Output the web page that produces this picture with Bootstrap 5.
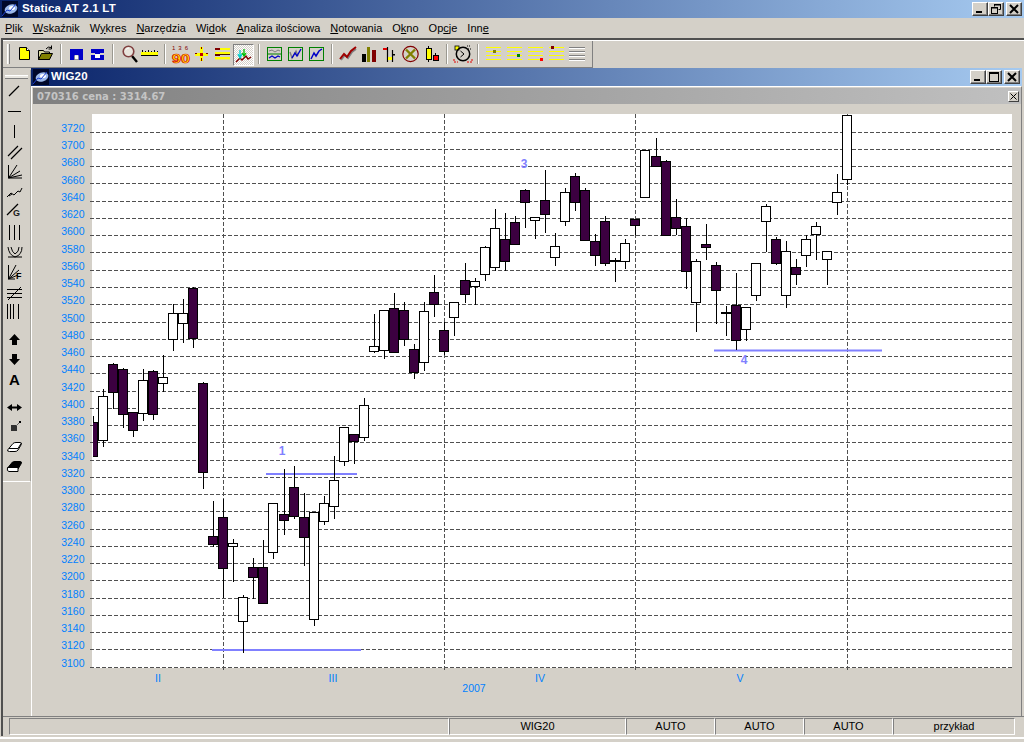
<!DOCTYPE html>
<html lang="pl">
<head>
<meta charset="utf-8">
<title>Statica AT 2.1 LT</title>
<link rel="stylesheet" href="https://cdn.jsdelivr.net/npm/bootstrap@5.3.0/dist/css/bootstrap.min.css">
<style>
html,body{margin:0;background:#d4d0c8;}
body{font-family:"Liberation Sans",Arial,sans-serif;font-size:11px;color:#000;overflow:hidden;}
.app-shell{width:1024px;height:742px;background:#d4d0c8;overflow:hidden;}
.cap-main{height:18px;background:linear-gradient(90deg,#0a246a,#a6caf0);color:#fff;font-weight:700;font-size:11.5px;padding:0 2px 0 2px;}
.cap-win{height:18px;background:linear-gradient(90deg,#0a246a,#a6caf0);color:#fff;font-weight:700;font-size:11.5px;padding:0 2px 0 2px;}
.cap-title{margin-left:4px;letter-spacing:.2px;}
.cap-name{margin-left:2px;letter-spacing:.2px;}
.cap-gap{width:2px;}
.win-btn{width:16px;height:14px;padding:0;margin:0;background:#d4d0c8;border-style:solid;border-width:1px;border-color:#fff #404040 #404040 #fff;border-radius:0;display:flex;align-items:center;justify-content:center;line-height:0;box-shadow:inset -1px -1px 0 #808080;}
.menu-row{height:20px;padding-left:5px;gap:10px;}
.menu-row a{color:#000;text-decoration:none;font-size:11px;line-height:20px;}
.client-box{height:698px;margin-left:1px;border-top:2px solid #505050;border-left:2px solid #505050;}
.tool-row{height:28px;border-top:1px solid #fff;}
.tool-strip{width:590px;height:27px;padding:3px 0 0 4px;border-right:1px solid #808080;border-bottom:1px solid #808080;}
.t-grip{width:3px;height:20px;margin-right:4px;border-left:1px solid #fff;border-right:1px solid #808080;background:#e8e6e0;}
.t-btn{width:21px;height:22px;flex:none;display:block;}
.t-sep{width:10px;height:20px;flex:none;display:flex;justify-content:center;}
.t-sep::before{content:"";width:2px;height:100%;background:#9a9890;border-right:1px solid #fff;}
.t-down{border-style:solid;border-width:1px;border-color:#808080 #fff #fff #808080;background-color:#fff;background-image:conic-gradient(#d4d0c8 25%,#fff 0 50%,#d4d0c8 0 75%,#fff 0);background-size:2px 2px;}
.work-row{height:648px;}
.side-bar{width:28px;height:412px;margin-top:2px;border-right:1px solid #a8a69f;border-bottom:1px solid #fff;flex:none;}
.side-grip{height:11px;padding:5px 2px 0 2px;}
.side-grip::before{content:"";display:block;height:2px;background:#e8e6e0;border-bottom:1px solid #808080;border-top:1px solid #fff;box-sizing:content-box;}
.s-btn{width:27px;height:20px;display:block;flex:none;}
.s-gap-a{height:9px;}
.s-gap-b{height:7px;}
.mdi-win{width:991px;flex:none;}
.mdi-body{height:630px;border-top:1px solid #fff;border-left:1px solid #fff;border-right:1px solid #808080;padding-top:1px;}
.info-bar{height:16px;margin-left:1px;background:linear-gradient(90deg,#808080,#c0c0c0);color:#c4c4c4;font-family:"DejaVu Sans",sans-serif;font-weight:700;font-size:10px;padding:0 2px 0 4px;}
.info-x{width:11px;height:11px;padding:0;background:#d4d0c8;border-style:solid;border-width:1px;border-color:#fff #404040 #404040 #fff;border-radius:0;line-height:0;display:flex;align-items:center;justify-content:center;}
.chart-svg{display:block;width:989px;height:612px;}
.chart-svg text{font-family:"Liberation Sans",Arial,sans-serif;}
.ax{fill:#0080ff;font-size:10.5px;}
.mk{fill:#8080ff;font-size:12px;font-weight:700;text-anchor:middle;}
.status-row{height:20px;border-top:1px solid #808080;padding:1px 0 0 6px;}
.st-cell{height:17px;border-style:solid;border-width:1px;border-color:#808080 #fff #fff #808080;font-size:11px;line-height:15px;text-align:center;}
.foot-line{height:2px;margin-top:1px;background:#fff;}
</style>
</head>
<body>
<div class="app-shell d-flex flex-column">

  <div class="cap-main d-flex align-items-center">
    <svg width="16" height="16" viewBox="0 0 16 16"><rect width="16" height="16" fill="#00082a"/><ellipse cx="9" cy="8" rx="6.5" ry="4.5" fill="#9bb8ea" transform="rotate(-20 9 8)"/><ellipse cx="10" cy="7" rx="3" ry="2" fill="#fff"/><path d="M0 15L5 9L8 10L14 3" stroke="#1c3fd0" fill="none"/></svg>
    <span class="cap-title flex-grow-1">Statica AT 2.1 LT</span>
    <div class="d-flex">
      <button class="win-btn" type="button" aria-label="min"><svg width="14" height="12" viewBox="0 0 14 12"><rect x="3" y="8" width="6" height="2" fill="#000"/></svg></button>
      <button class="win-btn" type="button" aria-label="restore"><svg width="14" height="12" viewBox="0 0 14 12"><path d="M5.5 3.5V1.5H11.5V6.5H9.5" fill="none" stroke="#000"/><rect x="5" y="1" width="7" height="1.5" fill="#000"/><rect x="2.5" y="4.5" width="6" height="6" fill="none" stroke="#000"/><rect x="2" y="4" width="7" height="1.5" fill="#000"/></svg></button>
      <span class="cap-gap"></span>
      <button class="win-btn" type="button" aria-label="close"><svg width="14" height="12" viewBox="0 0 14 12"><path d="M3 2L11 10M11 2L3 10" stroke="#000" stroke-width="2"/></svg></button>
    </div>
  </div>

  <nav class="menu-row d-flex">
    <a href="#"><u>P</u>lik</a><a href="#"><u>W</u>skaźnik</a><a href="#">W<u>y</u>kres</a><a href="#"><u>N</u>arzędzia</a><a href="#">Wi<u>d</u>ok</a><a href="#"><u>A</u>naliza ilościowa</a><a href="#"><u>N</u>otowania</a><a href="#">O<u>k</u>no</a><a href="#">Op<u>c</u>je</a><a href="#">Inn<u>e</u></a>
  </nav>

  <div class="client-box d-flex flex-column">
    <div class="tool-row">
      <div class="tool-strip d-flex align-items-start">
        <span class="t-grip"></span>
        <svg class="t-btn" viewBox="0 0 21 22"><path d="M5.5 3.5H12.5L15.5 6.5V15.5H5.5Z" fill="#ff0" stroke="#000"/><path d="M12.5 3.5V6.5H15.5" fill="#fff" stroke="#000"/></svg>
        <svg class="t-btn" viewBox="0 0 21 22"><path d="M3.5 6.5H8.5L9.5 8H14.5V15.5H3.5Z" fill="#d8d8a0" stroke="#000"/><path d="M3.5 15.5L6.5 9.5H17.5L14.5 15.5Z" fill="#808000" stroke="#000"/><path d="M11 5Q13 2 16 3.5M16.5 1.5V5H13.5" fill="none" stroke="#000"/></svg>
        <span class="t-sep"></span>
        <svg class="t-btn" viewBox="0 0 21 22"><path d="M4 5H17V16H12V11H9V16H4Z" fill="#0000c8"/><path d="M8.5 11.5V15.5H12.5V11.5" fill="#fff" stroke="#8a8a8a" stroke-width=".8"/></svg>
        <svg class="t-btn" viewBox="0 0 21 22"><path d="M4 5H17V16H4Z" fill="#0000c8"/><rect x="4" y="9" width="4" height="2" fill="#d4d0c8"/><rect x="13" y="9" width="4" height="2" fill="#d4d0c8"/><rect x="8" y="10" width="5" height="4" fill="#fff"/></svg>
        <span class="t-sep"></span>
        <svg class="t-btn" viewBox="0 0 21 22"><path d="M14 12L19 18" stroke="#000" stroke-width="2.4"/><circle cx="10.5" cy="7.5" r="5.3" fill="#e8e4dc" stroke="#804040" stroke-width="1.6"/><path d="M7.5 6Q9 4 11 4" stroke="#fff" fill="none"/></svg>
        <svg class="t-btn" viewBox="0 0 21 22"><rect x="2" y="8" width="17" height="3" fill="#ff0"/><path d="M2 11.5H19" stroke="#000"/><path d="M3.5 8V6M6.5 8V7M9.5 8V6M12.5 8V7M15.5 8V6M18.5 8V7" stroke="#000"/></svg>
        <span class="t-sep"></span>
        <svg class="t-btn" viewBox="0 0 21 22"><text x="2" y="6" font-size="6" fill="#800000" font-family="Liberation Sans" textLength="16" lengthAdjust="spacing">1 3 6</text><text x="2" y="18.5" font-size="12" font-weight="700" fill="#ff0" stroke="#e00000" stroke-width=".7" font-family="Liberation Sans" textLength="18" lengthAdjust="spacingAndGlyphs">90</text></svg>
        <svg class="t-btn" viewBox="0 0 21 22"><rect x="4" y="9" width="13" height="3" fill="#ff0"/><rect x="9" y="3" width="3" height="14" fill="#ff0"/><rect x="9" y="9" width="3" height="3" fill="#c00000"/><path d="M4 9.5H6M15 9.5H17M10.5 3V5M10.5 14V17" stroke="#800000"/></svg>
        <svg class="t-btn" viewBox="0 0 21 22"><rect x="3" y="4" width="5" height="2" fill="#800000"/><rect x="8" y="4" width="10" height="2" fill="#ff0"/><rect x="3" y="8" width="15" height="2" fill="#ff0"/><rect x="3" y="10" width="5" height="2" fill="#600000"/><rect x="8" y="10" width="10" height="1" fill="#402000"/><rect x="3" y="13" width="15" height="2.4" fill="#ff0"/></svg>
        <svg class="t-btn t-down" viewBox="0 0 19 20"><path d="M2 17L6 13L8 15L12 11L14 14L17 12" stroke="#800000" fill="none" stroke-width="1.4"/><path d="M6 5V13M4 9L6 13L8 9" stroke="#00d0d0" fill="none" stroke-width="1.3"/><path d="M10 4V11M8 8L10 11L12 8" stroke="#00c000" fill="none" stroke-width="1.3"/></svg>
        <span class="t-sep"></span>
        <svg class="t-btn" viewBox="0 0 21 22"><rect x="3.5" y="3.5" width="14" height="13" fill="#d4d0c8" stroke="#008000"/><path d="M4 10H17" stroke="#008000"/><path d="M5 7L8 6L11 8L14 6L16 7" stroke="#808080" fill="none"/><path d="M5 14L8 12L11 14L14 12L16 13" stroke="#0000c8" fill="none" stroke-width="1.2"/></svg>
        <svg class="t-btn" viewBox="0 0 21 22"><rect x="3.5" y="3.5" width="14" height="13" fill="#d4d0c8" stroke="#008000"/><path d="M5 8L7 14L11 7L13 12" stroke="#808080" fill="none" stroke-width="1.4"/><path d="M7 14L10 9L12 12L16 5" stroke="#0000c8" fill="none" stroke-width="1.4"/></svg>
        <svg class="t-btn" viewBox="0 0 21 22"><rect x="3.5" y="3.5" width="14" height="13" fill="#d4d0c8" stroke="#008000"/><path d="M5 15L8 9L10 12L13 7L16 5" stroke="#0000c8" fill="none" stroke-width="1.5"/></svg>
        <span class="t-sep"></span>
        <svg class="t-btn" viewBox="0 0 21 22"><path d="M4 16L8 11L11 14L15 8L19 5" stroke="#808080" fill="none" stroke-width="2"/><path d="M3 15L7 10L10 13L14 7L19 3" stroke="#a00000" fill="none" stroke-width="2"/></svg>
        <svg class="t-btn" viewBox="0 0 21 22"><rect x="4" y="10" width="4" height="8" fill="#000"/><rect x="9" y="3" width="3" height="15" fill="#808000"/><rect x="14" y="6" width="4" height="12" fill="#800000"/></svg>
        <svg class="t-btn" viewBox="0 0 21 22"><path d="M8.5 3V18M13.5 6V18" stroke="#000" fill="none" stroke-width="1.2"/><rect x="4" y="4" width="4" height="2" fill="#e00000"/><rect x="9" y="13" width="4" height="3" fill="#ff0"/><rect x="14" y="10" width="2" height="1.5" fill="#000"/></svg>
        <svg class="t-btn" viewBox="0 0 21 22"><circle cx="10.5" cy="10" r="7.7" fill="#d4d0c8" stroke="#800000" stroke-width="1.2"/><path d="M6 5.5L15 14.5M15 5.5L6 14.5" stroke="#808000" stroke-width="2.4"/></svg>
        <svg class="t-btn" viewBox="0 0 21 22"><path d="M7.5 2V18" stroke="#000"/><rect x="5.5" y="4.5" width="5" height="11" fill="#ff0" stroke="#000"/><path d="M14.5 9V17" stroke="#000"/><rect x="12.5" y="11.5" width="5" height="5" fill="#f00" stroke="#000"/></svg>
        <span class="t-sep"></span>
        <svg class="t-btn" viewBox="0 0 21 22"><rect x="3" y="2" width="4" height="4" fill="#ff0" stroke="#000" stroke-width=".8"/><circle cx="11" cy="10" r="6.7" fill="none" stroke="#000" stroke-width="1.5"/><path d="M8.5 7L12 10L8.5 13" fill="none" stroke="#000"/><path d="M15 2h4M16 5h3" stroke="#000" stroke-dasharray="1 1"/><path d="M2 15v3h4M15 18h5v-3" stroke="#e00000" stroke-dasharray="2 1" fill="none"/></svg>
        <span class="t-sep"></span>
        <svg class="t-btn" viewBox="0 0 21 22"><path d="M3 3.5H18M3 7.5H18M3 11.5H18M3 15.5H18" stroke="#ff0"/><rect x="10" y="6" width="3" height="3" fill="#808000"/></svg>
        <svg class="t-btn" viewBox="0 0 21 22"><path d="M3 3.5H18M3 7.5H18M3 11.5H18M3 15.5H18" stroke="#ff0"/><rect x="13" y="10" width="3" height="3" fill="#008000"/></svg>
        <svg class="t-btn" viewBox="0 0 21 22"><path d="M3 3.5H18M3 7.5H18M3 11.5H18M3 15.5H18" stroke="#ff0"/><rect x="15" y="14" width="3" height="3" fill="#f00"/></svg>
        <svg class="t-btn" viewBox="0 0 21 22"><path d="M3 3.5H18M3 7.5H18M3 11.5H18M3 15.5H18" stroke="#ff0"/><rect x="5" y="2" width="3" height="3" fill="#800000"/></svg>
        <svg class="t-btn" viewBox="0 0 21 22"><path d="M2 3.5H18M2 7.5H18M2 11.5H18M2 15.5H18" stroke="#808080"/><path d="M2 4.5H18M2 8.5H18M2 12.5H18M2 16.5H18" stroke="#fff"/></svg>
      </div>
    </div>

    <div class="work-row d-flex">
      <div class="side-bar d-flex flex-column">
        <div class="side-grip"></div>
        <svg class="s-btn" viewBox="0 0 27 20"><path d="M6 15L16 5" stroke="#000" stroke-width="1.2"/></svg>
        <svg class="s-btn" viewBox="0 0 27 20"><path d="M5 10.5H18" stroke="#000"/></svg>
        <svg class="s-btn" viewBox="0 0 27 20"><path d="M11.5 4V17" stroke="#000"/></svg>
        <svg class="s-btn" viewBox="0 0 27 20"><path d="M5 15L15 5M8 18L19 7" stroke="#000" stroke-width="1.2"/></svg>
        <svg class="s-btn" viewBox="0 0 27 20"><path d="M5.5 4V17H19" stroke="#000" fill="none"/><path d="M5.5 17L14 4M5.5 17L17 10M5.5 17L19 14" stroke="#000"/></svg>
        <svg class="s-btn" viewBox="0 0 27 20"><path d="M4 16L8 12L11 14L15 10L17 11L19 7" stroke="#000" fill="none"/><path d="M6 15L9 13" stroke="#000"/></svg>
        <svg class="s-btn" viewBox="0 0 27 20"><path d="M4 14L15 3" stroke="#000" stroke-width="1.3"/><text x="10" y="15" font-size="9" font-weight="700" fill="#202020" font-family="Liberation Sans">G</text></svg>
        <svg class="s-btn" viewBox="0 0 27 20"><path d="M6.5 4V19M11.5 4V19M16.5 4V19" stroke="#000"/></svg>
        <svg class="s-btn" viewBox="0 0 27 20"><path d="M5 6Q6 14 12 16Q19 14 19 6M8 6Q9 11 12 13Q16 11 16 6M5 16H19" stroke="#000" fill="none"/></svg>
        <svg class="s-btn" viewBox="0 0 27 20"><path d="M5.5 4V18H12" stroke="#000" fill="none"/><path d="M5.5 18L13 4M5.5 18L16 9M5.5 18L15 14" stroke="#000"/><text x="13" y="18" font-size="9" font-weight="700" font-family="Liberation Sans">F</text></svg>
        <svg class="s-btn" viewBox="0 0 27 20"><path d="M4 8.5H19M4 12.5H19M4 16.5H19M5 19L18 6" stroke="#000"/></svg>
        <svg class="s-btn" viewBox="0 0 27 20"><path d="M4.5 3V18M7.5 3V18M10.5 3V18M15.5 3V18" stroke="#000"/></svg>
        <div class="s-gap-a"></div>
        <svg class="s-btn" viewBox="0 0 27 20"><path d="M11.5 4L17 10H14V15H9V10H6Z" fill="#000"/></svg>
        <svg class="s-btn" viewBox="0 0 27 20"><path d="M11.5 15L17 9H14V4H9V9H6Z" fill="#000"/></svg>
        <svg class="s-btn" viewBox="0 0 27 20"><text x="11.5" y="15" font-size="15" font-weight="700" text-anchor="middle" font-family="Liberation Sans">A</text></svg>
        <div class="s-gap-b"></div>
        <svg class="s-btn" viewBox="0 0 27 20"><path d="M4 10.5L9 7V9.5H14V7L19 10.5L14 14V11.5H9V14Z" fill="#000"/></svg>
        <svg class="s-btn" viewBox="0 0 27 20"><rect x="8" y="8" width="6" height="6" fill="#303030"/><path d="M13 9L17 5" stroke="#606060"/><rect x="16" y="4" width="2" height="2" fill="#000"/></svg>
        <svg class="s-btn" viewBox="0 0 27 20"><path d="M5 12.5L10 6.5Q11 5.5 13 5.5H17Q19.5 5.5 18 8L15 13Q14 14.5 12 14.5H6.5Q3.5 14.5 5 12.5Z" fill="#fff" stroke="#000" stroke-linejoin="round"/><path d="M6 11.5H15L18 6.5" fill="none" stroke="#000"/></svg>
        <svg class="s-btn" viewBox="0 0 27 20"><path d="M5 10.5L9.5 5Q10.5 4.5 12 4.5H17Q19.5 4.5 18 7L15 12H5Z" fill="#000" stroke="#000" stroke-linejoin="round"/><path d="M4.5 10.5H15V14.5H6Q3.5 14.5 4.5 10.5Z" fill="#fff" stroke="#000" stroke-linejoin="round"/></svg>
      </div>

      <div class="mdi-win">
        <div class="cap-win d-flex align-items-center">
          <svg width="16" height="16" viewBox="0 0 16 16"><rect width="16" height="16" fill="#00082a"/><ellipse cx="9" cy="8" rx="6.5" ry="4.5" fill="#9bb8ea" transform="rotate(-20 9 8)"/><ellipse cx="10" cy="7" rx="3" ry="2" fill="#fff"/><path d="M0 15L5 9L8 10L14 3" stroke="#1c3fd0" fill="none"/></svg>
          <span class="flex-grow-1 cap-name">WIG20</span>
          <div class="d-flex">
            <button class="win-btn" type="button" aria-label="min"><svg width="14" height="12" viewBox="0 0 14 12"><rect x="3" y="8" width="6" height="2" fill="#000"/></svg></button>
            <button class="win-btn" type="button" aria-label="max"><svg width="14" height="12" viewBox="0 0 14 12"><rect x="2.5" y="1.5" width="9" height="9" fill="none" stroke="#000"/><rect x="2" y="1" width="10" height="2" fill="#000"/></svg></button>
            <span class="cap-gap"></span>
            <button class="win-btn" type="button" aria-label="close"><svg width="14" height="12" viewBox="0 0 14 12"><path d="M3 2L11 10M11 2L3 10" stroke="#000" stroke-width="2"/></svg></button>
          </div>
        </div>
        <div class="mdi-body">
          <div class="info-bar d-flex align-items-center justify-content-between">
            <span>070316 cena : 3314.67</span>
            <button class="info-x" type="button" aria-label="x"><svg width="9" height="9" viewBox="0 0 9 9"><path d="M1.5 1.5L7.5 7.5M7.5 1.5L1.5 7.5" stroke="#000"/></svg></button>
          </div>
          <svg class="chart-svg" viewBox="32 104 989 612" id="chart">
            <defs><clipPath id="plotclip"><rect x="93" y="114" width="919" height="560"/></clipPath></defs>
            <rect x="92" y="114" width="920" height="554" fill="#fff"/>
            <g id="grid"></g>
            <g class="ax" text-anchor="end">
              <text x="84.5" y="132">3720</text><text x="84.5" y="149">3700</text><text x="84.5" y="166">3680</text><text x="84.5" y="184">3660</text><text x="84.5" y="201">3640</text><text x="84.5" y="218">3620</text><text x="84.5" y="235">3600</text><text x="84.5" y="253">3580</text><text x="84.5" y="270">3560</text><text x="84.5" y="287">3540</text><text x="84.5" y="304">3520</text><text x="84.5" y="322">3500</text><text x="84.5" y="339">3480</text><text x="84.5" y="356">3460</text><text x="84.5" y="373">3440</text><text x="84.5" y="391">3420</text><text x="84.5" y="408">3400</text><text x="84.5" y="425">3380</text><text x="84.5" y="442">3360</text><text x="84.5" y="460">3340</text><text x="84.5" y="477">3320</text><text x="84.5" y="494">3300</text><text x="84.5" y="511">3280</text><text x="84.5" y="529">3260</text><text x="84.5" y="546">3240</text><text x="84.5" y="563">3220</text><text x="84.5" y="580">3200</text><text x="84.5" y="598">3180</text><text x="84.5" y="615">3160</text><text x="84.5" y="632">3140</text><text x="84.5" y="649">3120</text><text x="84.5" y="667">3100</text>
            </g>
            <g class="ax" text-anchor="middle">
              <text x="158" y="682">II</text><text x="333" y="682">III</text><text x="540" y="682">IV</text><text x="740" y="682">V</text><text x="474" y="692">2007</text>
            </g>
            <rect x="266" y="473" width="91" height="2" fill="#8080ff"/>
            <rect x="212" y="649" width="149" height="2" fill="#8080ff"/>
            <rect x="714" y="349.5" width="168" height="2" fill="#8080ff"/>
            <text class="mk" x="282" y="455">1</text>
            <text class="mk" x="524" y="168">3</text>
            <text class="mk" x="744" y="364">4</text>
            <g id="candles" clip-path="url(#plotclip)"></g>
          </svg>
        </div>
      </div>
    </div>

    <div class="status-row d-flex">
      <div class="st-cell" style="width:440px"></div>
      <div class="st-cell" style="width:177px">WIG20</div>
      <div class="st-cell" style="width:89px">AUTO</div>
      <div class="st-cell" style="width:89px">AUTO</div>
      <div class="st-cell" style="width:89px">AUTO</div>
      <div class="st-cell" style="width:122px">przykład</div>
    </div>
  </div>
  <div class="foot-line"></div>
</div>

<script>
(function(){
  var NS='http://www.w3.org/2000/svg';
  function el(p,n,a){var e=document.createElementNS(NS,n);for(var k in a)e.setAttribute(k,a[k]);p.appendChild(e);return e;}
  var g=document.getElementById('grid');
  for(var i=0;i<32;i++){var y=Math.round(666.7-17.26*i)+.5;el(g,'line',{x1:90,x2:1012,y1:y,y2:y,stroke:'#505050','stroke-dasharray':'4 2'});}
  [223,444,635,847].forEach(function(x){el(g,'line',{x1:x+.5,x2:x+.5,y1:114,y2:671,stroke:'#505050','stroke-dasharray':'4 2'});});
  var d=[[93,416,422,456,422,1],[103,389,396,440,446,0],[113,363,364,392,408,1],[123,368,369,414,427,1],[133,412,412,430,436,1],[143,369,380,413,420,0],[153,370,371,414,419,1],[163,355,377,383,391,0],[173,304,313,339,350,0],[183,299,313,323,342,0],[193,287,288,338,347,1],[203,382,383,472,488,1],[213,501,536,544,546,1],[223,499,517,568,597,1],[233,539,543,546,581,0],[243,595,597,621,652,0],[253,558,567,577,598,1],[263,540,567,603,603,1],[273,503,503,552,558,0],[284,469,514,520,534,1],[294,466,487,516,518,1],[304,493,517,537,565,1],[314,512,512,619,625,0],[324,496,503,521,524,0],[334,456,480,506,518,0],[344,427,427,461,465,0],[354,434,434,441,463,1],[364,398,405,437,440,0],[374,314,346,351,352,0],[384,310,310,350,358,0],[394,293,308,352,352,1],[404,302,310,339,345,1],[414,344,349,372,378,1],[424,302,311,362,370,0],[434,275,292,304,316,1],[444,322,330,351,354,1],[454,302,302,317,335,0],[465,263,280,294,302,1],[475,278,281,286,304,0],[485,246,247,274,280,0],[495,209,228,267,270,0],[505,213,239,261,270,1],[515,216,222,244,244,1],[525,189,190,202,227,1],[535,217,217,220,238,0],[545,170,200,214,232,1],[555,233,246,257,265,0],[565,188,192,221,225,0],[575,173,176,202,210,1],[585,188,190,240,240,1],[595,234,241,255,265,1],[605,216,221,263,265,1],[615,258,260,261,281,1],[625,239,243,261,268,0],[635,219,219,225,234,1],[645,150,150,197,197,0],[656,138,156,166,166,1],[666,160,161,235,235,1],[676,199,217,228,234,1],[686,218,226,271,288,1],[696,259,261,302,331,0],[706,224,244,247,259,1],[716,262,265,290,323,1],[726,306,312,313,335,1],[736,273,305,340,349,1],[746,307,307,329,340,0],[756,263,263,295,300,0],[766,204,206,221,251,0],[776,237,239,263,264,1],[786,241,251,295,307,0],[796,259,267,274,284,1],[806,235,239,255,266,0],[816,222,226,234,259,0],[827,251,251,259,284,0],[837,174,192,202,214,0],[847,115,115,179,184,0]];
  var c=document.getElementById('candles');
  d.forEach(function(r){
    el(c,'line',{x1:r[0]+.5,x2:r[0]+.5,y1:r[1],y2:r[4]+1,stroke:'#000'});
    el(c,'rect',{x:r[0]-4.5,y:r[2]+.5,width:9,height:r[3]-r[2],fill:r[5]?'#3c0040':'#fff',stroke:'#000'});
  });
})();
</script>
<script src="https://cdn.jsdelivr.net/npm/bootstrap@5.3.0/dist/js/bootstrap.bundle.min.js"></script>
</body>
</html>
